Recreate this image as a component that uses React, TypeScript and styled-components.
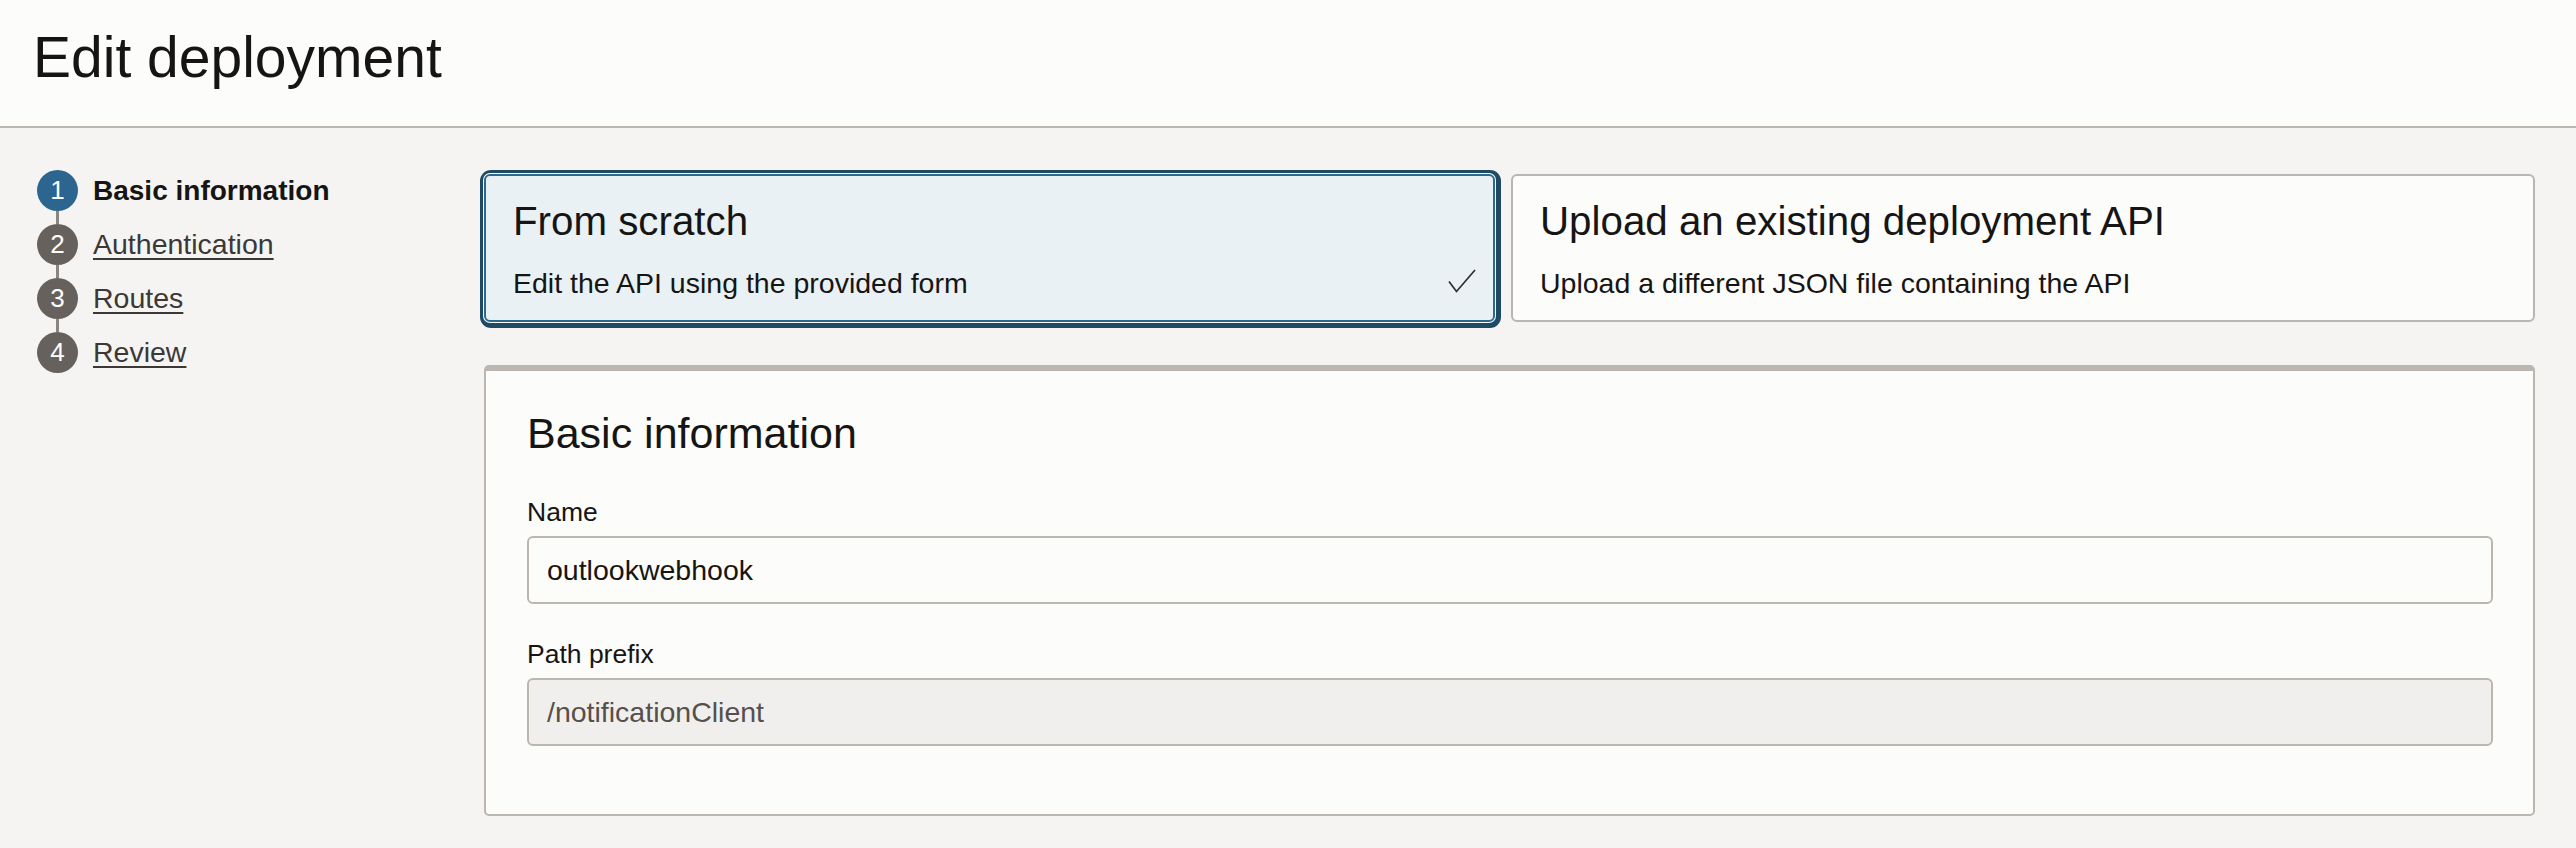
import styled, { createGlobalStyle } from 'styled-components'

const GlobalStyle = createGlobalStyle`
  * {
    box-sizing: border-box;
  }

  body {
    margin: 0;
    background: #f5f4f2;
    color: #161513;
    font-family: 'Liberation Sans', Arial, sans-serif;
  }
`

const Header = styled.header`
  height: 128px;
  padding: 23px 0 0 33px;
  background: #fcfcfb;
  border-bottom: 2px solid #bcb6b1;
`

const PageTitle = styled.h1`
  margin: 0;
  font-size: 57px;
  line-height: 68px;
  font-weight: 400;
`

const Body = styled.div`
  display: flex;
`

const Sidebar = styled.nav`
  width: 484px;
  flex-shrink: 0;
  padding: 42px 0 0 37px;
`

const Steps = styled.ol`
  display: flex;
  flex-direction: column;
  gap: 13px;
  margin: 0;
  padding: 0;
  list-style: none;
`

const Step = styled.li`
  position: relative;
  display: flex;
  align-items: center;
  gap: 15px;
  height: 41px;

  & + &::before {
    content: '';
    position: absolute;
    left: 19px;
    top: -13px;
    width: 3px;
    height: 13px;
    background: #8b8580;
  }
`

const StepNumber = styled.span<{ $active?: boolean }>`
  display: flex;
  align-items: center;
  justify-content: center;
  width: 41px;
  height: 41px;
  border-radius: 50%;
  background: ${(p) => (p.$active ? '#2c6690' : '#67615d')};
  color: #fff;
  font-size: 26px;
`

const StepLabel = styled.span<{ $active?: boolean }>`
  font-size: ${(p) => (p.$active ? '28px' : '28.5px')};
  font-weight: ${(p) => (p.$active ? 700 : 400)};
  color: ${(p) => (p.$active ? '#161513' : '#3b3835')};
  text-decoration: ${(p) => (p.$active ? 'none' : 'underline')};
  text-underline-offset: 4px;
  text-decoration-thickness: 2px;
`

const Main = styled.main`
  flex: 1;
  padding: 46px 41px 0 0;
`

const Options = styled.div`
  display: grid;
  grid-template-columns: 1011px 1fr;
  gap: 16px;
`

const OptionCard = styled.div<{ $selected?: boolean }>`
  position: relative;
  height: 148px;
  padding: 22px 28px 0 27px;
  border-radius: 6px;
  border: 2px solid ${(p) => (p.$selected ? '#2b6a8f' : '#bab5b0')};
  background: ${(p) => (p.$selected ? '#e9f1f5' : '#fcfcfb')};
  box-shadow: ${(p) =>
    p.$selected ? '0 0 0 1px #fcfcfb, 1px 1px 0 5px #1f4a66' : 'none'};
`

const OptionTitle = styled.div`
  font-size: 40.3px;
  line-height: 48px;
`

const OptionText = styled.div`
  margin-top: 19px;
  font-size: 28.5px;
  line-height: 36px;
`

const Check = styled.svg`
  position: absolute;
  right: 17px;
  bottom: 27px;
  width: 28px;
  height: 24px;
`

const Panel = styled.section`
  margin-top: 43px;
  height: 451px;
  padding: 37px 40px 0 41px;
  background: #fcfcfb;
  border: 2px solid #bcb6b1;
  border-top-width: 6px;
  border-radius: 5px;
`

const PanelTitle = styled.h2`
  margin: 0 0 38px;
  font-size: 43px;
  line-height: 50px;
  font-weight: 400;
`

const Field = styled.div`
  & + & {
    margin-top: 34px;
  }
`

const Label = styled.label`
  display: block;
  margin-bottom: 8px;
  font-size: 26.5px;
  line-height: 32px;
`

const Input = styled.div<{ $disabled?: boolean }>`
  display: flex;
  align-items: center;
  height: 68px;
  padding: 0 18px;
  border: 2px solid #bcb6b1;
  border-radius: 6px;
  background: ${(p) => (p.$disabled ? '#f0efed' : '#fcfcfb')};
  color: ${(p) => (p.$disabled ? '#55504c' : '#161513')};
  font-size: 28.5px;
`

const steps = ['Basic information', 'Authentication', 'Routes', 'Review']

export default function App() {
  return (
    <>
      <GlobalStyle />
      <Header>
        <PageTitle>Edit deployment</PageTitle>
      </Header>
      <Body>
        <Sidebar>
          <Steps>
            {steps.map((label, i) => (
              <Step key={label}>
                <StepNumber $active={i === 0}>{i + 1}</StepNumber>
                <StepLabel $active={i === 0}>{label}</StepLabel>
              </Step>
            ))}
          </Steps>
        </Sidebar>

        <Main>
          <Options>
            <OptionCard $selected>
              <OptionTitle>From scratch</OptionTitle>
              <OptionText>Edit the API using the provided form</OptionText>
              <Check viewBox='0 0 28 24' fill='none'>
                <path
                  d='M1 12.5 L8.5 22.5 L27 1'
                  stroke='#312d2a'
                  strokeWidth='1.7'
                />
              </Check>
            </OptionCard>
            <OptionCard>
              <OptionTitle>Upload an existing deployment API</OptionTitle>
              <OptionText>Upload a different JSON file containing the API</OptionText>
            </OptionCard>
          </Options>

          <Panel>
            <PanelTitle>Basic information</PanelTitle>
            <Field>
              <Label>Name</Label>
              <Input>outlookwebhook</Input>
            </Field>
            <Field>
              <Label>Path prefix</Label>
              <Input $disabled>/notificationClient</Input>
            </Field>
          </Panel>
        </Main>
      </Body>
    </>
  )
}
